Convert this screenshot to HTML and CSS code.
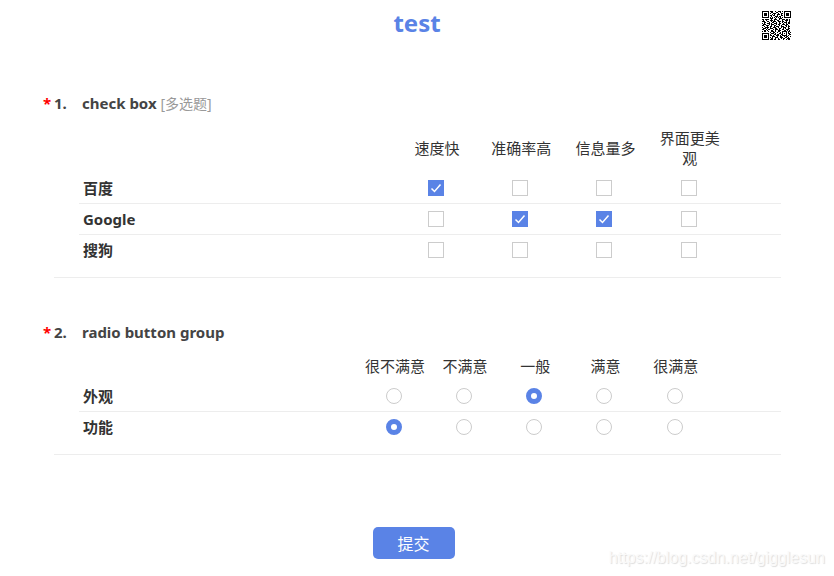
FILE: index.html
```
<!DOCTYPE html>
<html lang="zh-CN">
<head>
    <meta charset="UTF-8">
    <meta name="viewport" content="width=device-width, initial-scale=1.0">
    <title>test</title>
    <link rel="stylesheet" href="styles.css">
</head>
<body>
    <header class="header">
        <h1 class="title">test</h1>
        <svg class="qrcode" viewBox="0 0 29 29" role="img" aria-label="QR code" shape-rendering="crispEdges">
            <!-- finder and alignment squares -->
            <path fill="none" stroke="#000" d="M.5 .5h6v6h-6zM22.5 .5h6v6h-6zM.5 22.5h6v6h-6zM20.5 20.5h4v4h-4z"/>
            <path fill="#000" d="M2 2h3v3h-3zM24 2h3v3h-3zM2 24h3v3h-3zM22 22h1v1h-1z"/>
            <!-- data modules -->
            <path fill="none" stroke="#000" d="M8 .5h3m2 0h1m2 0h3m1 0h1
                M9 1.5h2m3 0h2m2 0h1
                M8 2.5h1m2 0h3m2 0h1m2 0h2
                M10 3.5h1m1 0h1m2 0h3m1 0h1
                M8 4.5h2m1 0h2m2 0h1m3 0h2
                M9 5.5h1m3 0h3m1 0h2
                M8 6.5h1m1 0h1m1 0h1m1 0h1m1 0h1m1 0h1m1 0h1
                M8 7.5h3m2 0h1m3 0h3
                M0 8.5h2m1 0h4m2 0h1m2 0h3m2 0h1m2 0h3m1 0h2m1 0h1
                M1 9.5h1m2 0h1m3 0h3m1 0h1m2 0h2m3 0h1m2 0h3m1 0h1
                M0 10.5h3m2 0h2m2 0h1m1 0h3m2 0h3m1 0h2m2 0h1m2 0h1
                M2 11.5h2m3 0h1m2 0h2m2 0h1m2 0h1m2 0h1m1 0h3m1 0h2
                M0 12.5h1m1 0h1m2 0h3m1 0h1m2 0h3m2 0h2m2 0h1m2 0h1m1 0h2
                M1 13.5h3m3 0h1m1 0h3m2 0h1m1 0h2m2 0h3m1 0h2
                M0 14.5h2m2 0h3m2 0h1m2 0h2m3 0h1m1 0h1m3 0h2m1 0h1
                M2 15.5h1m2 0h1m2 0h2m2 0h1m1 0h3m2 0h3m2 0h1m1 0h2
                M0 16.5h1m2 0h4m1 0h1m2 0h3m2 0h1m2 0h1m1 0h3m2 0h1
                M1 17.5h3m1 0h1m2 0h3m2 0h2m2 0h2m2 0h1m1 0h1m2 0h2
                M0 18.5h2m2 0h1m1 0h2m3 0h1m1 0h3m1 0h1m2 0h2m2 0h3
                M2 19.5h2m1 0h1m3 0h2m2 0h1m2 0h3m3 0h2m1 0h1m1 0h1
                M0 20.5h1m1 0h2m2 0h1m2 0h3m1 0h1m2 0h2m8 0h2
                M8 21.5h1m2 0h2m2 0h1m2 0h1m7 0h1m1 0h1
                M9 22.5h3m1 0h1m3 0h2m7 0h2
                M8 23.5h1m3 0h2m1 0h2m2 0h1m7 0h2
                M8 24.5h2m1 0h1m2 0h3m1 0h1m7 0h1
                M10 25.5h3m2 0h1m2 0h2m2 0h1m1 0h2m2 0h1
                M8 26.5h1m1 0h1m2 0h3m2 0h3m2 0h2m1 0h1
                M9 27.5h2m2 0h1m2 0h1m2 0h1m1 0h2m2 0h3
                M8 28.5h3m1 0h2m2 0h2m3 0h1m2 0h1m1 0h2"/>
        </svg>
    </header>

    <form class="survey" action="#" method="post">
        <section class="question">
            <h2 class="topic"><span class="required">*</span><span class="number">1.</span>check box <span class="type">[多选题]</span></h2>
            <table class="matrix">
                <colgroup>
                    <col class="col-label-wide">
                    <col class="col-check" span="4">
                    <col>
                </colgroup>
                <thead>
                    <tr>
                        <td></td>
                        <th scope="col">速度快</th>
                        <th scope="col">准确率高</th>
                        <th scope="col">信息量多</th>
                        <th scope="col">界面更美观</th>
                        <td></td>
                    </tr>
                </thead>
                <tbody>
                    <tr>
                        <th scope="row">百度</th>
                        <td><input type="checkbox" name="q1_1" aria-label="百度 速度快" checked></td>
                        <td><input type="checkbox" name="q1_1" aria-label="百度 准确率高"></td>
                        <td><input type="checkbox" name="q1_1" aria-label="百度 信息量多"></td>
                        <td><input type="checkbox" name="q1_1" aria-label="百度 界面更美观"></td>
                        <td></td>
                    </tr>
                    <tr>
                        <th scope="row">Google</th>
                        <td><input type="checkbox" name="q1_2" aria-label="Google 速度快"></td>
                        <td><input type="checkbox" name="q1_2" aria-label="Google 准确率高" checked></td>
                        <td><input type="checkbox" name="q1_2" aria-label="Google 信息量多" checked></td>
                        <td><input type="checkbox" name="q1_2" aria-label="Google 界面更美观"></td>
                        <td></td>
                    </tr>
                    <tr>
                        <th scope="row">搜狗</th>
                        <td><input type="checkbox" name="q1_3" aria-label="搜狗 速度快"></td>
                        <td><input type="checkbox" name="q1_3" aria-label="搜狗 准确率高"></td>
                        <td><input type="checkbox" name="q1_3" aria-label="搜狗 信息量多"></td>
                        <td><input type="checkbox" name="q1_3" aria-label="搜狗 界面更美观"></td>
                        <td></td>
                    </tr>
                </tbody>
            </table>
        </section>

        <section class="question">
            <h2 class="topic"><span class="required">*</span><span class="number">2.</span>radio button group</h2>
            <table class="matrix">
                <colgroup>
                    <col class="col-label">
                    <col class="col-radio" span="5">
                    <col>
                </colgroup>
                <thead>
                    <tr>
                        <td></td>
                        <th scope="col">很不满意</th>
                        <th scope="col">不满意</th>
                        <th scope="col">一般</th>
                        <th scope="col">满意</th>
                        <th scope="col">很满意</th>
                        <td></td>
                    </tr>
                </thead>
                <tbody>
                    <tr>
                        <th scope="row">外观</th>
                        <td><input type="radio" name="q2_1" aria-label="外观 很不满意"></td>
                        <td><input type="radio" name="q2_1" aria-label="外观 不满意"></td>
                        <td><input type="radio" name="q2_1" aria-label="外观 一般" checked></td>
                        <td><input type="radio" name="q2_1" aria-label="外观 满意"></td>
                        <td><input type="radio" name="q2_1" aria-label="外观 很满意"></td>
                        <td></td>
                    </tr>
                    <tr>
                        <th scope="row">功能</th>
                        <td><input type="radio" name="q2_2" aria-label="功能 很不满意" checked></td>
                        <td><input type="radio" name="q2_2" aria-label="功能 不满意"></td>
                        <td><input type="radio" name="q2_2" aria-label="功能 一般"></td>
                        <td><input type="radio" name="q2_2" aria-label="功能 满意"></td>
                        <td><input type="radio" name="q2_2" aria-label="功能 很满意"></td>
                        <td></td>
                    </tr>
                </tbody>
            </table>
        </section>

        <div class="actions">
            <button type="submit" class="submit">提交</button>
        </div>
    </form>

    <div class="watermark">https://blog.csdn.net/gigglesun</div>
</body>
</html>
```
FILE: styles.css
```
* {
    box-sizing: border-box;
}
body {
    position: relative;
    margin: 0;
    min-height: 100vh;
    background: #fff;
    color: #333;
    font: 15px/20px "Noto Sans", "Noto Sans CJK SC", sans-serif;
}
.header {
    position: relative;
    padding: 7px 0 8px;
}
.title {
    margin: 0;
    color: #5a83e6;
    font-size: 24px;
    line-height: 32px;
    text-align: center;
}
.qrcode {
    position: absolute;
    top: 11px;
    right: 43px;
    width: 29px;
    height: 29px;
}
.survey {
    padding: 46px 53px 0 54px;
}
.question {
    margin-bottom: 44px;
    padding-bottom: 11px;
    border-bottom: 1px solid #ededed;
}
.topic {
    position: relative;
    margin: 0;
    padding-left: 28px;
    color: #444;
    font-size: 15px;
    line-height: 20px;
}
.required {
    position: absolute;
    left: -11px;
    color: #f00;
}
.number {
    position: absolute;
    left: 0;
}
.type {
    color: #999;
    font-size: 14px;
    font-weight: normal;
}
.matrix {
    width: calc(100% - 25px);
    margin: 9px 0 0 25px;
    table-layout: fixed;
    border-collapse: separate;
    border-spacing: 0;
}
.col-label-wide {
    width: 45%;
}
.col-label {
    width: 40%;
}
.col-check {
    width: 12%;
}
.col-radio {
    width: 10%;
}
.matrix th,
.matrix td {
    padding: 0;
    text-align: center;
}
.matrix thead th {
    padding: 5px;
    font-weight: normal;
}
.matrix tbody th,
.matrix tbody td {
    height: 31px;
    border-bottom: 1px solid #ededed;
}
.matrix tbody tr:last-child th,
.matrix tbody tr:last-child td {
    border-bottom-color: transparent;
}
.matrix tbody th {
    padding-left: 4px;
    text-align: left;
}
.matrix tbody td {
    padding-right: 2px;
}
input {
    display: block;
    width: 16px;
    height: 16px;
    margin: 0 auto;
    appearance: none;
    border: 1px solid #ccc;
    background: #fff;
}
input[type="radio"] {
    border-radius: 50%;
}
input[type="checkbox"]:checked {
    border-color: #5a83e6;
    background: #5a83e6 url("data:image/svg+xml,%3Csvg xmlns='http://www.w3.org/2000/svg' viewBox='0 0 14 14'%3E%3Cpath d='M2.5 7.5L5.5 10.5L11.5 3.5' fill='none' stroke='white' stroke-width='1.5'/%3E%3C/svg%3E") center / 14px 14px no-repeat;
}
input[type="radio"]:checked {
    border: 5px solid #5a83e6;
}
.actions {
    padding: 28px 8px 0 0;
    text-align: center;
}
.submit {
    width: 82px;
    height: 32px;
    padding: 0;
    border: 0;
    border-radius: 5px;
    background: #5a83e6;
    color: #fff;
    font: 16px/32px "Noto Sans CJK SC", sans-serif;
}
.watermark {
    position: absolute;
    right: 9px;
    bottom: 8px;
    color: #fafafa;
    font: 16px/20px "Liberation Sans", sans-serif;
    text-shadow: 1px 1px 1px #ddd;
}
```
